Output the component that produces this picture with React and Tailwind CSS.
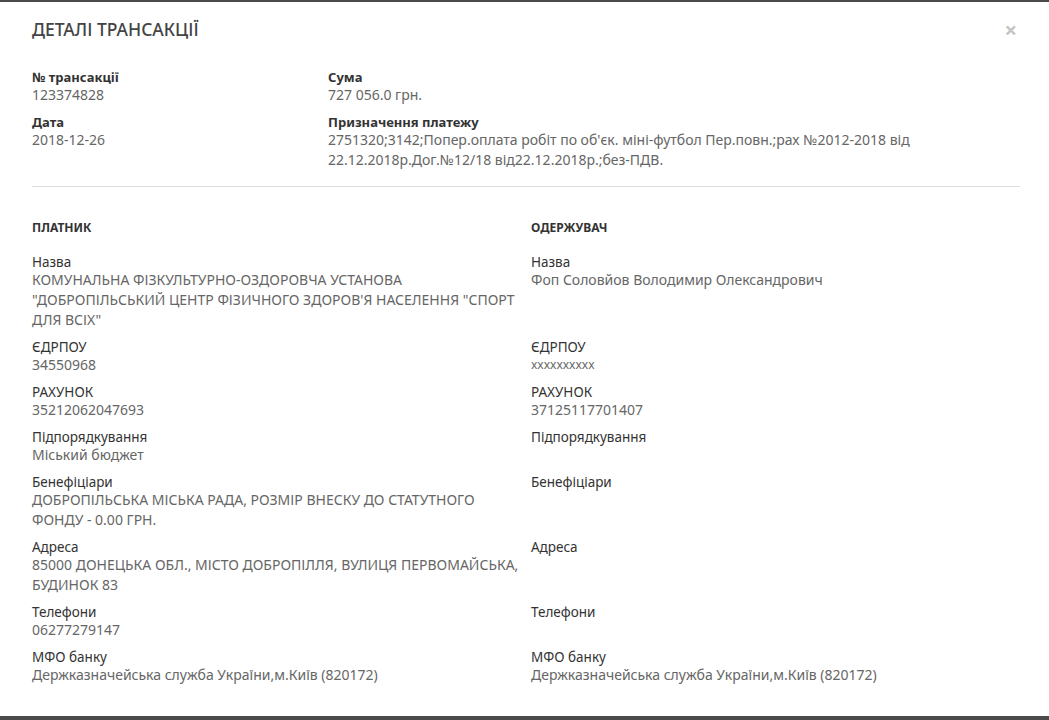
import React from "react";

const payer = [
  { label: "Назва", value: 'КОМУНАЛЬНА ФІЗКУЛЬТУРНО-ОЗДОРОВЧА УСТАНОВА "ДОБРОПІЛЬСЬКИЙ ЦЕНТР ФІЗИЧНОГО ЗДОРОВ\'Я НАСЕЛЕННЯ "СПОРТ ДЛЯ ВСІХ"' },
  { label: "ЄДРПОУ", value: "34550968" },
  { label: "РАХУНОК", value: "35212062047693" },
  { label: "Підпорядкування", value: "Міський бюджет" },
  { label: "Бенефіціари", value: "ДОБРОПІЛЬСЬКА МІСЬКА РАДА, РОЗМІР ВНЕСКУ ДО СТАТУТНОГО ФОНДУ - 0.00 ГРН." },
  { label: "Адреса", value: "85000 ДОНЕЦЬКА ОБЛ., МІСТО ДОБРОПІЛЛЯ, ВУЛИЦЯ ПЕРВОМАЙСЬКА, БУДИНОК 83" },
  { label: "Телефони", value: "06277279147" },
  { label: "МФО банку", value: "Держказначейська служба України,м.Київ (820172)" },
];

const payee = [
  { label: "Назва", value: "Фоп Соловйов Володимир Олександрович" },
  { label: "ЄДРПОУ", value: "xxxxxxxxxx", small: true },
  { label: "РАХУНОК", value: "37125117701407" },
  { label: "Підпорядкування", value: "" },
  { label: "Бенефіціари", value: "" },
  { label: "Адреса", value: "" },
  { label: "Телефони", value: "" },
  { label: "МФО банку", value: "Держказначейська служба України,м.Київ (820172)" },
];

function Field({ label, value, small, bold }) {
  return (
    <div className="mb-[10px]">
      <div className={`leading-[15px] text-[#333] ${bold ? "text-[13px] font-bold" : "text-[13.5px] font-normal"}`}>{label}</div>
      <div className={`leading-[20px] text-[#666] min-h-[20px] ${small ? "text-[12px]" : "text-[14px]"}`}>{value}</div>
    </div>
  );
}

export default function App() {
  return (
    <div className="h-[720px] w-full bg-[#4a4a4a] pt-[2px] pb-[4px] flex flex-col" style={{ fontFamily: '"Noto Sans", "Open Sans", sans-serif' }}>
      <div className="flex-1 bg-white pl-[32px] pr-[29px] pt-[15px]">
        {/* header */}
        <div className="flex items-center justify-between">
          <h1 className="text-[17.5px] leading-[24px] font-medium text-[#444] uppercase">Деталі трансакції</h1>
          <button className="text-[22px] leading-[24px] font-bold text-[#c4c4c4] mr-[3px]">×</button>
        </div>

        {/* transaction info */}
        <div className="mt-[29px] flex">
          <div className="w-[296px]">
            <Field label="№ трансакції" value="123374828" bold />
            <Field label="Дата" value="2018-12-26" bold />
          </div>
          <div className="flex-1 pr-[60px]">
            <Field label="Сума" value="727 056.0 грн." bold />
            <Field label="Призначення платежу" value="2751320;3142;Попер.оплата робіт по об'єк. міні-футбол Пер.повн.;рах №2012-2018 від 22.12.2018р.Дог.№12/18 від22.12.2018р.;без-ПДВ." bold />
          </div>
        </div>

        <div className="mt-[6px] h-px bg-[#ddd]" />

        {/* payer / payee */}
        <div className="mt-[32px] grid grid-cols-2 gap-x-[10px]">
          <div className="text-[12px] leading-[17px] font-bold text-[#333] uppercase mb-[19px]">Платник</div>
          <div className="text-[12px] leading-[17px] font-bold text-[#333] uppercase mb-[19px]">Одержувач</div>
          {payer.map((p, i) => (
            <React.Fragment key={p.label}>
              <Field {...p} />
              <Field {...payee[i]} />
            </React.Fragment>
          ))}
        </div>
      </div>
    </div>
  );
}
